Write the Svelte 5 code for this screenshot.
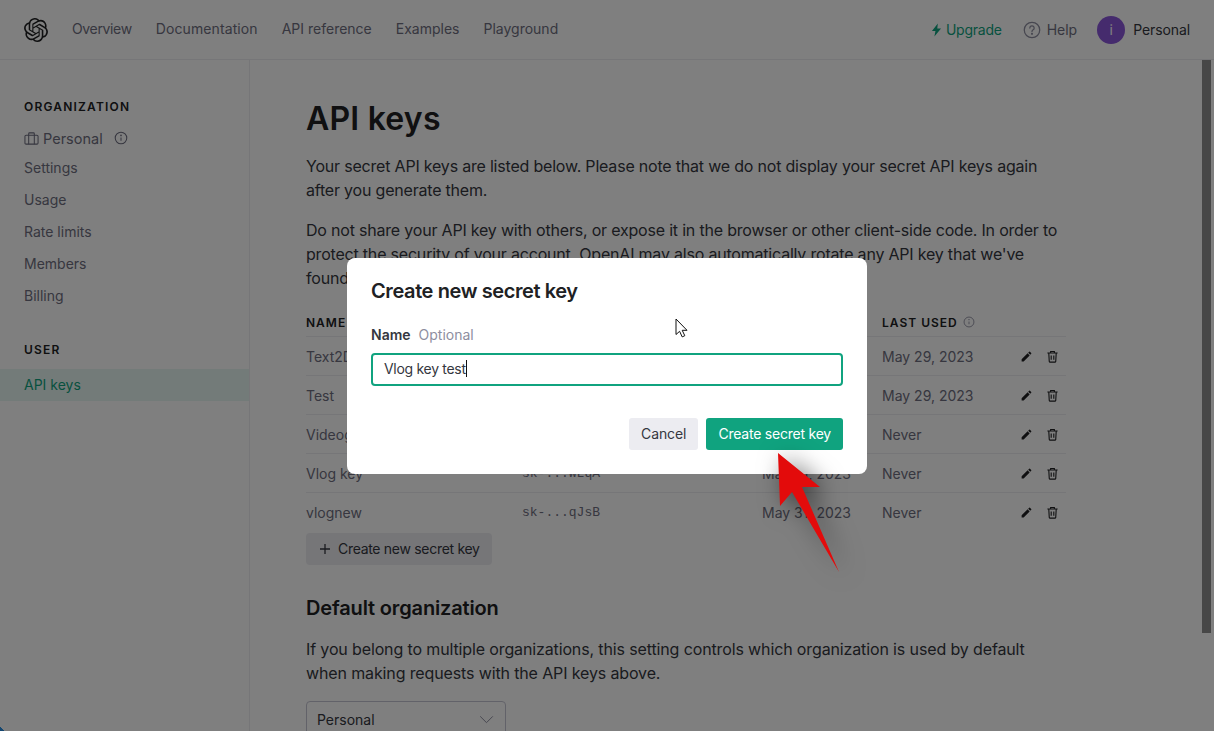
<script lang="ts">
  const topLinks = ["Overview", "Documentation", "API reference", "Examples", "Playground"];
  const orgLinks = ["Settings", "Usage", "Rate limits", "Members", "Billing"];

  const keys = [
    { name: "Text2Dcode", key: "sk-...aB3x", created: "May 29, 2023", used: "May 29, 2023" },
    { name: "Test", key: "sk-...k9Tc", created: "May 29, 2023", used: "May 29, 2023" },
    { name: "Videogen", key: "sk-...p2Rd", created: "May 30, 2023", used: "Never" },
    { name: "Vlog key", key: "sk-...WLqA", created: "May 31, 2023", used: "Never" },
    { name: "vlognew", key: "sk-...qJsB", created: "May 31, 2023", used: "Never" },
  ];

  let keyName = $state("Vlog key test");
</script>

<div class="page">
  <header class="topbar">
    <svg class="logo" viewBox="0 0 24 24" width="24" height="24" fill="#202123"><path d="M22.2819 9.8211a5.9847 5.9847 0 0 0-.5157-4.9108 6.0462 6.0462 0 0 0-6.5098-2.9A6.0651 6.0651 0 0 0 4.9807 4.1818a5.9847 5.9847 0 0 0-3.9977 2.9 6.0462 6.0462 0 0 0 .7427 7.0966 5.98 5.98 0 0 0 .511 4.9107 6.051 6.051 0 0 0 6.5146 2.9001A5.9847 5.9847 0 0 0 13.2599 24a6.0557 6.0557 0 0 0 5.7718-4.2058 5.9894 5.9894 0 0 0 3.9977-2.9001 6.0557 6.0557 0 0 0-.7475-7.0729zm-9.022 12.6081a4.4755 4.4755 0 0 1-2.8764-1.0408l.1419-.0804 4.7783-2.7582a.7948.7948 0 0 0 .3927-.6813v-6.7369l2.02 1.1686a.071.071 0 0 1 .038.052v5.5826a4.504 4.504 0 0 1-4.4945 4.4944zm-9.6607-4.1254a4.4708 4.4708 0 0 1-.5346-3.0137l.142.0852 4.783 2.7582a.7712.7712 0 0 0 .7806 0l5.8428-3.3685v2.3324a.0804.0804 0 0 1-.0332.0615L9.74 19.9502a4.4992 4.4992 0 0 1-6.1408-1.6464zM2.3408 7.8956a4.485 4.485 0 0 1 2.3655-1.9728V11.6a.7664.7664 0 0 0 .3879.6765l5.8144 3.3543-2.0201 1.1685a.0757.0757 0 0 1-.071 0l-4.8303-2.7865A4.504 4.504 0 0 1 2.3408 7.872zm16.5963 3.8558L13.1038 8.364 15.1192 7.2a.0757.0757 0 0 1 .071 0l4.8303 2.7913a4.4944 4.4944 0 0 1-.6765 8.1042v-5.6772a.79.79 0 0 0-.407-.667zm2.0107-3.0231l-.142-.0852-4.7735-2.7818a.7759.7759 0 0 0-.7854 0L9.409 9.2297V6.8974a.0662.0662 0 0 1 .0284-.0615l4.8303-2.7866a4.4992 4.4992 0 0 1 6.6802 4.66zM8.3065 12.863l-2.02-1.1638a.0804.0804 0 0 1-.038-.0567V6.0742a4.4992 4.4992 0 0 1 7.3757-3.4537l-.142.0805L8.704 5.459a.7948.7948 0 0 0-.3927.6813zm1.0976-2.3654l2.602-1.4998 2.6069 1.4998v2.9994l-2.5974 1.4997-2.6067-1.4997Z"/></svg>
    <nav class="toplinks">
      {#each topLinks as link}
        <span>{link}</span>
      {/each}
    </nav>
    <div class="topright">
      <span class="upgrade">
        <svg viewBox="0 0 12 16" width="11" height="14" fill="#10a37f"><path d="M7.5 0.5 0.8 9h4L3.6 15.5 11.2 6.3H6.9z"/></svg>
        Upgrade
      </span>
      <span class="help">
        <svg viewBox="0 0 20 20" width="18" height="18" fill="none" stroke="#8e8ea0" stroke-width="1.4"><circle cx="10" cy="10" r="8.6"/><path d="M7.6 7.8a2.4 2.4 0 1 1 3.7 2c-.9.6-1.3 1-1.3 2" stroke-linecap="round"/><circle cx="10" cy="14.3" r=".5" fill="#8e8ea0"/></svg>
        Help
      </span>
      <span class="account">
        <span class="avatar">i</span>
        Personal
      </span>
    </div>
  </header>

  <div class="body">
    <aside class="sidebar">
      <h4>ORGANIZATION</h4>
      <div class="org">
        <svg viewBox="0 0 16 16" width="15" height="15" fill="none" stroke="#6e6e80" stroke-width="1.1"><rect x="1" y="4.5" width="14" height="9.5" rx="1.2"/><path d="M5 14v-9.500M11 14v-9.500M5 4.500V2.800a.8.8 0 0 1 .8-.8h4.400a.8.8 0 0 1 .8.8v1.700"/></svg>
        <span>Personal</span>
        <svg class="org-info" viewBox="0 0 16 16" width="14" height="14" fill="none" stroke="#6e6e80" stroke-width="1.2"><circle cx="8" cy="8" r="6.6"/><path d="M8 7.400v3.600"/><circle cx="8" cy="5" r=".4"/></svg>
      </div>
      {#each orgLinks as link}
        <div class="side-link">{link}</div>
      {/each}
      <h4 class="user-head">USER</h4>
      <div class="side-link active">API keys</div>
    </aside>

    <main class="content">
      <h1>API keys</h1>
      <p>Your secret API keys are listed below. Please note that we do not display your secret API keys again after you generate them.</p>
      <p>Do not share your API key with others, or expose it in the browser or other client-side code. In order to protect the security of your account, OpenAI may also automatically rotate any API key that we've found has leaked publicly.</p>

      <div class="keys">
        <div class="row head">
          <span>NAME</span>
          <span>KEY</span>
          <span>CREATED</span>
          <span class="used-head">LAST USED
            <svg viewBox="0 0 16 16" width="12" height="12" fill="none" stroke="#8e8ea0" stroke-width="1.2"><circle cx="8" cy="8" r="6.6"/><path d="M8 7.400v3.600"/><circle cx="8" cy="5" r=".4"/></svg>
          </span>
          <span></span>
        </div>
        {#each keys as k}
          <div class="row">
            <span>{k.name}</span>
            <span class="mono">{k.key}</span>
            <span>{k.created}</span>
            <span>{k.used}</span>
            <span class="actions">
              <svg viewBox="0 0 24 24" width="13" height="13" fill="#202123"><path d="M3 17.250V21h3.750L17.810 9.940l-3.750-3.750L3 17.250zM20.710 7.040a.996.996 0 0 0 0-1.410l-2.340-2.340a.996.996 0 0 0-1.410 0l-1.830 1.830 3.750 3.750 1.830-1.830z"/></svg>
              <svg viewBox="0 0 14 14" width="13" height="13" fill="none" stroke="#202123" stroke-width="1.2"><path d="M1.500 3.200h11M5 3V1.600h4V3M3 3.200l.5 9a1 1 0 0 0 1 .9h5a1 1 0 0 0 1-.9l.5-9M5.600 5.800v4.800M8.400 5.800v4.800"/></svg>
            </span>
          </div>
        {/each}
      </div>

      <button class="new-key">
        <svg viewBox="0 0 12 12" width="12" height="12" stroke="#353740" stroke-width="1.3"><path d="M6 1v10M1 6h10"/></svg>
        Create new secret key
      </button>

      <h2>Default organization</h2>
      <p class="org-note">If you belong to multiple organizations, this setting controls which organization is used by default<br />when making requests with the API keys above.</p>

      <div class="org-select">
        <span>Personal</span>
        <svg viewBox="0 0 16 10" width="15" height="9" fill="none" stroke="#8e8ea0" stroke-width="1.1"><path d="M1 1.500 8 8.500l7-7"/></svg>
      </div>
    </main>
  </div>

  <div class="scrollthumb"></div>
  <div class="corner"></div>

  <div class="overlay">
    <div class="modal">
      <h3>Create new secret key</h3>
      <div class="field-label"><b>Name</b><span>Optional</span></div>
      <div class="input">{keyName}<i class="caret"></i></div>
      <div class="modal-actions">
        <button class="cancel">Cancel</button>
        <button class="confirm">Create secret key</button>
      </div>
    </div>
  </div>

  <svg class="pointer" viewBox="0 0 14 22" width="14" height="22">
    <path d="M1 1v15.500l3.600-3.200 2.600 5.600 2.600-1.200-2.600-5.400h4.800z" fill="#fff" stroke="#111" stroke-width="1"/>
  </svg>

  <svg class="arrow" viewBox="0 0 80 130" width="80" height="130">
    <path d="M8 3 50 37 32 37 69 122 22 42 10 56z" fill="#e30b0b"/>
  </svg>
</div>

<style>
  :global(body) {
    margin: 0;
    overflow: hidden;
  }

  .page {
    position: relative;
    height: 731px;
    overflow: hidden;
    background: #fff;
    color: #353740;
    font-family: Inter, "Noto Sans", sans-serif;
    font-size: 14px;
  }

  .topbar {
    display: flex;
    align-items: center;
    height: 59px;
    padding: 0 24px;
    border-bottom: 1px solid #ececf1;
    box-sizing: content-box;
  }

  .logo {
    flex-shrink: 0;
  }

  .toplinks {
    display: flex;
    gap: 24px;
    margin-left: 24px;
    margin-top: -2px;
    color: #6e6e80;
  }

  .toplinks span:first-child {
    letter-spacing: -0.35px;
  }

  .toplinks span:nth-child(2) {
    letter-spacing: 0.1px;
  }

  .topright {
    display: flex;
    align-items: center;
    margin-left: auto;
    color: #6e6e80;
  }

  .upgrade {
    display: flex;
    align-items: center;
    gap: 4px;
    color: #10a37f;
    letter-spacing: -0.25px;
  }

  .help {
    display: flex;
    align-items: center;
    gap: 6px;
    margin-left: 21px;
  }

  .account {
    display: flex;
    align-items: center;
    gap: 8px;
    margin-left: 20px;
    color: #353740;
    letter-spacing: -0.1px;
  }

  .avatar {
    display: flex;
    align-items: center;
    justify-content: center;
    width: 28px;
    height: 28px;
    border-radius: 50%;
    background: #8a56da;
    color: #fff;
    font-size: 14px;
  }

  .body {
    display: flex;
  }

  .sidebar {
    width: 249px;
    height: 671px;
    flex-shrink: 0;
    padding-top: 40px;
    border-right: 1px solid #ececf1;
    box-sizing: content-box;
    color: #6e6e80;
  }

  .sidebar h4 {
    margin: 0 0 0 24px;
    height: 14px;
    font-size: 12px;
    line-height: 14px;
    font-weight: 600;
    letter-spacing: 1.2px;
    color: #202123;
  }

  .sidebar .user-head {
    margin-top: 32px;
    margin-bottom: 12px;
  }

  .org {
    display: flex;
    align-items: center;
    gap: 4px;
    height: 24px;
    margin: 12px 0 1px 24px;
    font-size: 14.5px;
  }

  .org-info {
    margin-left: 7px;
  }

  .side-link {
    display: flex;
    align-items: center;
    height: 32px;
    padding-left: 24px;
  }

  .side-link.active {
    height: 30px;
    padding-bottom: 2px;
    background: #e7f6f2;
    color: #10a37f;
  }

  .content {
    width: 760px;
    padding: 40px 0 0 56px;
    flex-shrink: 0;
  }

  h1 {
    margin: 0 0 16px;
    font-size: 32px;
    line-height: 38px;
    font-weight: 600;
    color: #202123;
    letter-spacing: 0.2px;
  }

  .content p {
    margin: 0 0 16px;
    font-size: 16px;
    line-height: 24px;
    color: #353740;
    letter-spacing: -0.2px;
  }

  .content .org-note {
    letter-spacing: -0.13px;
  }

  .row {
    display: grid;
    grid-template-columns: 216px 240px 120px 112px 72px;
    align-items: center;
    height: 38px;
    border-bottom: 1px solid #ececf1;
    color: #6e6e80;
    font-size: 14px;
  }

  .row:last-child {
    border-bottom: none;
  }

  .row.head {
    height: 28px;
    padding-top: 2px;
    font-size: 12px;
    font-weight: 600;
    letter-spacing: 1px;
    color: #202123;
  }

  .used-head {
    display: flex;
    align-items: center;
    gap: 5px;
  }

  .mono {
    font-family: "Liberation Mono", monospace;
    font-size: 13px;
  }

  .actions {
    display: flex;
    justify-content: flex-end;
    gap: 13px;
    padding-right: 7px;
  }

  .new-key {
    display: flex;
    align-items: center;
    gap: 7px;
    height: 32px;
    margin-top: 2px;
    padding: 0 12px 1px 13px;
    border: none;
    border-radius: 4px;
    background: #ececf1;
    color: #353740;
    font: inherit;
    letter-spacing: -0.3px;
  }

  h2 {
    margin: 29px 0 15px;
    font-size: 20px;
    line-height: 28px;
    font-weight: 600;
    color: #202123;
    letter-spacing: -0.15px;
  }

  .org-select {
    display: flex;
    align-items: center;
    justify-content: space-between;
    width: 200px;
    height: 37px;
    padding: 0 11px 0 10px;
    margin-top: 2px;
    border: 1px solid #c5c5d2;
    border-radius: 4px;
    box-sizing: border-box;
    color: #353740;
  }

  .scrollthumb {
    position: absolute;
    right: 3px;
    top: 60px;
    width: 9px;
    height: 573px;
    background: #8f8f8f;
  }

  .corner {
    position: absolute;
    left: 0;
    bottom: 0;
    width: 4px;
    height: 4px;
    background: linear-gradient(45deg, #2a8fe0 50%, transparent 50%);
  }

  .overlay {
    position: absolute;
    inset: 0;
    display: flex;
    align-items: center;
    justify-content: center;
    background: rgba(0, 0, 0, 0.5);
  }

  .modal {
    width: 520px;
    height: 216px;
    padding: 20px 24px 24px;
    border-radius: 8px;
    background: #fff;
    box-sizing: border-box;
  }

  h3 {
    margin: 0;
    font-size: 20px;
    line-height: 26px;
    font-weight: 600;
    color: #202123;
    letter-spacing: -0.4px;
  }

  .field-label {
    display: flex;
    gap: 8px;
    margin-top: 21px;
    line-height: 20px;
    font-size: 14px;
  }

  .field-label b {
    font-weight: 600;
    color: #353740;
  }

  .field-label span {
    color: #8e8ea0;
  }

  .input {
    display: flex;
    align-items: center;
    height: 33px;
    margin-top: 8px;
    padding: 0 11px 2px;
    border: 2px solid #10a37f;
    border-radius: 4px;
    box-sizing: border-box;
    color: #353740;
    font-size: 14px;
    letter-spacing: -0.3px;
  }

  .caret {
    width: 1px;
    height: 17px;
    background: #111;
  }

  .modal-actions {
    display: flex;
    justify-content: flex-end;
    gap: 8px;
    margin-top: 32px;
  }

  .modal-actions button {
    height: 32px;
    padding: 0 12px 1px;
    border: none;
    border-radius: 3px;
    font: inherit;
  }

  .cancel {
    background: #ececf1;
    color: #353740;
    letter-spacing: -0.1px;
  }

  .confirm {
    background: #10a37f;
    color: #fff;
    letter-spacing: -0.22px;
  }

  .pointer {
    position: absolute;
    left: 675px;
    top: 318px;
  }

  .arrow {
    position: absolute;
    left: 770px;
    top: 450px;
    filter: drop-shadow(6px 4px 12px rgba(0, 0, 0, 0.55));
  }
</style>
